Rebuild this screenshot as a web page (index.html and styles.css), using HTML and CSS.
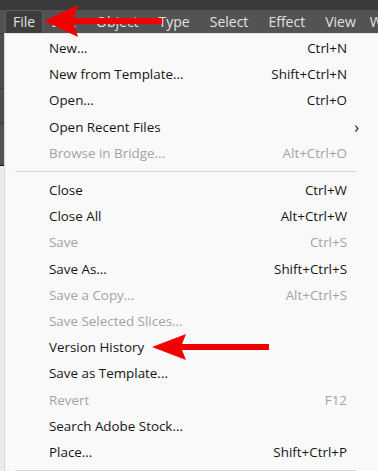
FILE: index.html
```html
<!DOCTYPE html>
<html lang="en">
<head>
  <meta charset="UTF-8">
  <meta name="viewport" content="width=device-width, initial-scale=1.0">
  <title>File menu</title>
  <link rel="stylesheet" href="styles.css">
</head>
<body>
  <div class="topstrip"></div>
  <nav class="menubar">
    <span class="menubar-item active">File</span>
    <span class="menubar-item">Edit</span>
    <span class="menubar-item">Object</span>
    <span class="menubar-item">Type</span>
    <span class="menubar-item">Select</span>
    <span class="menubar-item">Effect</span>
    <span class="menubar-item">View</span>
    <span class="menubar-item last">Window</span>
  </nav>

  <div class="workspace">
    <div class="side-strip">
      <div class="side-dark"></div>
      <div class="side-light"></div>
    </div>

    <ul class="menu">
      <li class="menu-item"><span>New...</span><span class="key">Ctrl+N</span></li>
      <li class="menu-item"><span>New from Template...</span><span class="key">Shift+Ctrl+N</span></li>
      <li class="menu-item"><span>Open...</span><span class="key">Ctrl+O</span></li>
      <li class="menu-item"><span>Open Recent Files</span><span class="submenu">&#x203A;</span></li>
      <li class="menu-item disabled"><span>Browse in Bridge...</span><span class="key">Alt+Ctrl+O</span></li>
      <li class="separator"></li>
      <li class="menu-item"><span>Close</span><span class="key">Ctrl+W</span></li>
      <li class="menu-item"><span>Close All</span><span class="key">Alt+Ctrl+W</span></li>
      <li class="menu-item disabled"><span>Save</span><span class="key">Ctrl+S</span></li>
      <li class="menu-item"><span>Save As...</span><span class="key">Shift+Ctrl+S</span></li>
      <li class="menu-item disabled"><span>Save a Copy...</span><span class="key">Alt+Ctrl+S</span></li>
      <li class="menu-item disabled"><span>Save Selected Slices...</span></li>
      <li class="menu-item"><span>Version History</span></li>
      <li class="menu-item"><span>Save as Template...</span></li>
      <li class="menu-item disabled"><span>Revert</span><span class="key">F12</span></li>
      <li class="menu-item"><span>Search Adobe Stock...</span></li>
      <li class="menu-item"><span>Place...</span><span class="key">Shift+Ctrl+P</span></li>
      <li class="separator"></li>
    </ul>
  </div>

  <!-- red annotation arrows -->
  <svg class="arrow arrow-top" width="130" height="36" viewBox="0 0 130 36">
    <polygon points="0,18 34,2 30,15 118,15 118,21 30,21 34,34" fill="#f20000"/>
  </svg>
  <svg class="arrow arrow-version" width="120" height="28" viewBox="0 0 120 28">
    <polygon points="0,14 34,1 30,11 117,11 117,17 30,17 34,27" fill="#f20000"/>
  </svg>
</body>
</html>
```

FILE: styles.css
```css
* {
  margin: 0;
  padding: 0;
  box-sizing: border-box;
}

body {
  font-family: "Open Sans", "Noto Sans", sans-serif;
  background: #535353;
  width: 378px;
  height: 471px;
  overflow: hidden;
  position: relative;
}

.topstrip {
  height: 10px;
  background: #3a3a3a;
}

.menubar {
  display: flex;
  align-items: center;
  height: 23px;
  padding-left: 5px;
  background: #535353;
  white-space: nowrap;
  overflow: hidden;
}

.menubar-item {
  flex-shrink: 0;
  color: #e2e2e2;
  font-size: 14px;
  padding: 0 10px;
  line-height: 22px;
}

.menubar-item.active {
  background: #3d3d3d;
  border: 1px solid #5e5e5e;
  border-bottom: none;
  border-radius: 3px 3px 0 0;
  line-height: 22px;
  padding: 0 7px;
  margin-right: -2px;
}

.menubar-item.last {
  margin-left: -6px;
}

.workspace {
  display: flex;
  height: 438px;
}

.side-strip {
  width: 4px;
  display: flex;
  flex-direction: column;
}

.side-dark {
  height: 133px;
  background: #4d4d4d;
  border-top: 1px solid #3a3a3a;
  border-bottom: 1px solid #111;
  background-image: linear-gradient(#4d4d4d 54px, #3a3a3a 54px, #3a3a3a 55px, #4d4d4d 55px, #4d4d4d 89px, #3a3a3a 89px, #3a3a3a 90px, #525252 90px);
}

.side-light {
  flex: 1;
  background: #ececec;
}

.menu {
  flex: 1;
  list-style: none;
  background: #f9f9f9;
  border-left: 1px solid #d6d6d6;
  border-top: 1px solid #e6e6e6;
  padding-top: 1px;
}

.menu-item {
  display: flex;
  justify-content: space-between;
  align-items: center;
  height: 26.2px;
  padding: 0 31px 0 44px;
  font-size: 13.4px;
  color: #151515;
}

.menu-item.disabled {
  color: #a3a3a3;
}

.key {
  font-size: 13.4px;
}

.submenu {
  font-size: 16px;
  margin-right: -12px;
  line-height: 1;
}

.separator {
  height: 11px;
  margin: 0 22px 0 10px;
  border-bottom: 1px solid #d7d7d7;
  transform: translateY(-5px);
}

.arrow {
  position: absolute;
}

.arrow-top {
  left: 44px;
  top: 3px;
}

.arrow-version {
  left: 152px;
  top: 333px;
}
```
